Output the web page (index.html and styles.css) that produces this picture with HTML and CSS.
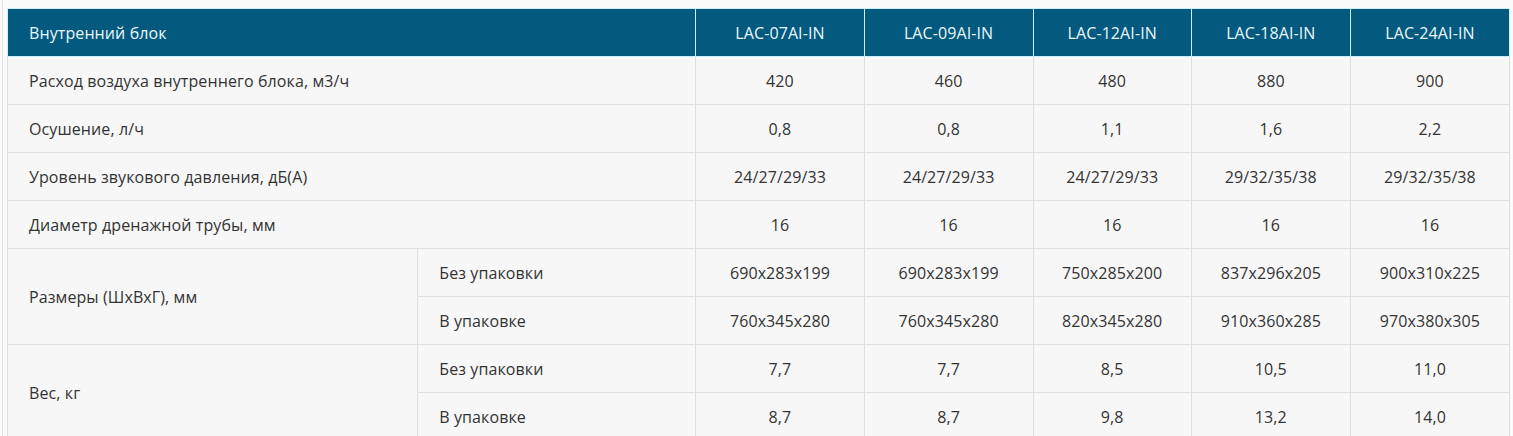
FILE: index.html
```html
<!DOCTYPE html>
<html lang="ru">
<head>
<meta charset="utf-8">
<link rel="stylesheet" href="styles.css">
</head>
<body>
<div class="frame">
<table class="specs">
<colgroup>
<col class="c-name"><col class="c-sub"><col class="c-1"><col class="c-2"><col class="c-3"><col class="c-4"><col class="c-5">
</colgroup>
<thead>
<tr>
<th colspan="2" class="lead">Внутренний блок</th>
<th>LAC-07AI-IN</th>
<th>LAC-09AI-IN</th>
<th>LAC-12AI-IN</th>
<th>LAC-18AI-IN</th>
<th>LAC-24AI-IN</th>
</tr>
</thead>
<tbody>
<tr><td colspan="2" class="lead">Расход воздуха внутреннего блока, м3/ч</td><td>420</td><td>460</td><td>480</td><td>880</td><td>900</td></tr>
<tr><td colspan="2" class="lead">Осушение, л/ч</td><td>0,8</td><td>0,8</td><td>1,1</td><td>1,6</td><td>2,2</td></tr>
<tr><td colspan="2" class="lead">Уровень звукового давления, дБ(А)</td><td>24/27/29/33</td><td>24/27/29/33</td><td>24/27/29/33</td><td>29/32/35/38</td><td>29/32/35/38</td></tr>
<tr><td colspan="2" class="lead">Диаметр дренажной трубы, мм</td><td>16</td><td>16</td><td>16</td><td>16</td><td>16</td></tr>
<tr><td rowspan="2" class="lead">Размеры (ШхВхГ), мм</td><td class="lead">Без упаковки</td><td>690x283x199</td><td>690x283x199</td><td>750x285x200</td><td>837x296x205</td><td>900x310x225</td></tr>
<tr><td class="lead">В упаковке</td><td>760x345x280</td><td>760x345x280</td><td>820x345x280</td><td>910x360x285</td><td>970x380x305</td></tr>
<tr><td rowspan="2" class="lead">Вес, кг</td><td class="lead">Без упаковки</td><td>7,7</td><td>7,7</td><td>8,5</td><td>10,5</td><td>11,0</td></tr>
<tr><td class="lead">В упаковке</td><td>8,7</td><td>8,7</td><td>9,8</td><td>13,2</td><td>14,0</td></tr>
</tbody>
</table>
</div>
</body>
</html>
```
FILE: styles.css
```css
html, body {
  margin: 0;
  padding: 0;
  background: #fbfbfb;
}
.frame {
  margin-left: 2px;
  border-left: 1px solid #e2e2e2;
  padding: 8px 4px 0 4px;
  height: 436px;
  box-sizing: border-box;
  overflow: hidden;
}
.specs {
  border-collapse: collapse;
  table-layout: fixed;
  width: 1503px;
  font-family: "Open Sans", "Liberation Sans", sans-serif;
  font-size: 16px;
  letter-spacing: 0.1px;
  color: #333;
}
.c-name { width: 410px; }
.c-sub { width: 278px; }
.c-1 { width: 168px; }
.c-2 { width: 169px; }
.c-3 { width: 158px; }
.c-4 { width: 159px; }
.c-5 { width: 159px; }
.specs th {
  background: #04597e;
  color: #eaf7fc;
  font-weight: 400;
  height: 47px;
  padding: 0;
  text-align: center;
  border: 1px solid #cdeefa;
}
.specs td {
  background: #f7f7f7;
  height: 47px;
  padding: 0;
  text-align: center;
  border: 1px solid #dedede;
}
.specs .lead {
  text-align: left;
  padding-left: 21px;
}
```
